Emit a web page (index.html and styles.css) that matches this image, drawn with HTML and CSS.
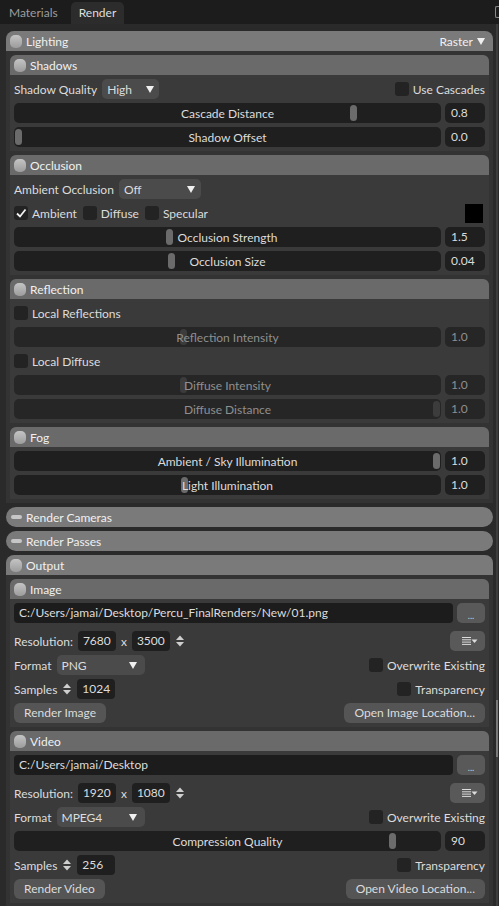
FILE: index.html
```html
<!DOCTYPE html>
<html lang="en">
  <head>
    <meta charset="UTF-8" />
    <meta name="viewport" content="width=device-width, initial-scale=1.0" />
    <title>Render Settings</title>
    <link rel="stylesheet" href="styles.css">
  </head>
  <body>
    <div class="tabs">
      <div class="tab">Materials</div>
      <div class="tab on">Render</div>
      <div class="tab-end"></div>
    </div>

    <div class="view">
      <div class="scroll">

        <!-- Lighting -->
        <section class="panel">
          <header class="head"><span class="ico"></span>Lighting<span class="mode">Raster <i class="tri"></i></span></header>
          <div class="panel-body">

            <section class="sub">
              <header class="head"><span class="ico"></span>Shadows</header>
              <div class="sub-body">
                <div class="row gap5">
                  <span>Shadow Quality</span>
                  <div class="drop w-quality">High <i class="tri"></i></div>
                  <label class="opt right"><span class="check"></span>Use Cascades</label>
                </div>
                <div class="row">
                  <div class="slider"><span class="knob" style="left:336px"></span><span class="label">Cascade Distance</span></div>
                  <div class="num">0.8</div>
                </div>
                <div class="row">
                  <div class="slider"><span class="knob" style="left:1px"></span><span class="label">Shadow Offset</span></div>
                  <div class="num">0.0</div>
                </div>
              </div>
            </section>

            <section class="sub">
              <header class="head"><span class="ico"></span>Occlusion</header>
              <div class="sub-body">
                <div class="row gap5">
                  <span>Ambient Occlusion</span>
                  <div class="drop w-ao">Off <i class="tri"></i></div>
                </div>
                <div class="row gap6">
                  <label class="opt"><span class="check">
                    <svg width="14" height="14" viewBox="0 0 14 14"><polyline points="3,7.5 6,10.5 11.5,3.5" fill="none" stroke="#f2f2f2" stroke-width="1.8"/></svg>
                  </span>Ambient</label>
                  <label class="opt"><span class="check"></span>Diffuse</label>
                  <label class="opt"><span class="check"></span>Specular</label>
                  <span class="swatch"></span>
                </div>
                <div class="row">
                  <div class="slider"><span class="knob" style="left:152px"></span><span class="label">Occlusion Strength</span></div>
                  <div class="num">1.5</div>
                </div>
                <div class="row">
                  <div class="slider"><span class="knob" style="left:154px"></span><span class="label">Occlusion Size</span></div>
                  <div class="num">0.04</div>
                </div>
              </div>
            </section>

            <section class="sub">
              <header class="head"><span class="ico"></span>Reflection</header>
              <div class="sub-body">
                <div class="row">
                  <label class="opt"><span class="check"></span>Local Reflections</label>
                </div>
                <div class="row off">
                  <div class="slider"><span class="knob" style="left:166px"></span><span class="label">Reflection Intensity</span></div>
                  <div class="num">1.0</div>
                </div>
                <div class="row">
                  <label class="opt"><span class="check"></span>Local Diffuse</label>
                </div>
                <div class="row off">
                  <div class="slider"><span class="knob" style="left:166px"></span><span class="label">Diffuse Intensity</span></div>
                  <div class="num">1.0</div>
                </div>
                <div class="row off">
                  <div class="slider"><span class="knob" style="left:419px"></span><span class="label">Diffuse Distance</span></div>
                  <div class="num">1.0</div>
                </div>
              </div>
            </section>

            <section class="sub">
              <header class="head"><span class="ico"></span>Fog</header>
              <div class="sub-body">
                <div class="row">
                  <div class="slider"><span class="knob" style="left:419px"></span><span class="label">Ambient / Sky Illumination</span></div>
                  <div class="num">1.0</div>
                </div>
                <div class="row">
                  <div class="slider"><span class="knob" style="left:167px"></span><span class="label">Light Illumination</span></div>
                  <div class="num">1.0</div>
                </div>
              </div>
            </section>

          </div>
        </section>

        <section class="panel closed">
          <header class="head"><span class="ico"></span>Render Cameras</header>
        </section>
        <section class="panel closed">
          <header class="head"><span class="ico"></span>Render Passes</header>
        </section>

        <!-- Output -->
        <section class="panel">
          <header class="head"><span class="ico"></span>Output</header>
          <div class="panel-body">

            <section class="sub">
              <header class="head"><span class="ico"></span>Image</header>
              <div class="sub-body">
                <div class="row path-row">
                  <div class="path">C:/Users/jamai/Desktop/Percu_FinalRenders/New/01.png</div>
                  <div class="dots">...</div>
                </div>
                <div class="row gap5">
                  <span>Resolution:</span>
                  <div class="field">7680</div>
                  <span>x</span>
                  <div class="field">3500</div>
                  <svg class="spin" width="10" height="16" viewBox="0 0 10 16"><polygon points="1,7 5,2.5 9,7" fill="#cfcfcf"/><polygon points="1,9 5,13.5 9,9" fill="#cfcfcf"/></svg>
                  <div class="menu">
                    <svg width="16" height="10" viewBox="0 0 16 10"><path d="M0 1.5h9M0 3.8h9M0 6.1h9M0 8.4h9" stroke="#dcdcdc" stroke-width="1"/><polygon points="9.5,3.5 15.5,3.5 12.5,7" fill="#dcdcdc"/></svg>
                  </div>
                </div>
                <div class="row gap5">
                  <span>Format</span>
                  <div class="drop w-format">PNG <i class="tri"></i></div>
                  <label class="opt right"><span class="check"></span>Overwrite Existing</label>
                </div>
                <div class="row gap5">
                  <span>Samples</span>
                  <svg class="spin" width="10" height="16" viewBox="0 0 10 16"><polygon points="1,7 5,2.5 9,7" fill="#cfcfcf"/><polygon points="1,9 5,13.5 9,9" fill="#cfcfcf"/></svg>
                  <div class="field">1024</div>
                  <label class="opt right"><span class="check"></span>Transparency</label>
                </div>
                <div class="row">
                  <div class="btn">Render Image</div>
                  <div class="btn right">Open Image Location...</div>
                </div>
              </div>
            </section>

            <section class="sub">
              <header class="head"><span class="ico"></span>Video</header>
              <div class="sub-body">
                <div class="row path-row">
                  <div class="path">C:/Users/jamai/Desktop</div>
                  <div class="dots">...</div>
                </div>
                <div class="row gap5">
                  <span>Resolution:</span>
                  <div class="field">1920</div>
                  <span>x</span>
                  <div class="field">1080</div>
                  <svg class="spin" width="10" height="16" viewBox="0 0 10 16"><polygon points="1,7 5,2.5 9,7" fill="#cfcfcf"/><polygon points="1,9 5,13.5 9,9" fill="#cfcfcf"/></svg>
                  <div class="menu">
                    <svg width="16" height="10" viewBox="0 0 16 10"><path d="M0 1.5h9M0 3.8h9M0 6.1h9M0 8.4h9" stroke="#dcdcdc" stroke-width="1"/><polygon points="9.5,3.5 15.5,3.5 12.5,7" fill="#dcdcdc"/></svg>
                  </div>
                </div>
                <div class="row gap5">
                  <span>Format</span>
                  <div class="drop w-format">MPEG4 <i class="tri"></i></div>
                  <label class="opt right"><span class="check"></span>Overwrite Existing</label>
                </div>
                <div class="row">
                  <div class="slider"><span class="knob" style="left:375px"></span><span class="label">Compression Quality</span></div>
                  <div class="num">90</div>
                </div>
                <div class="row gap5">
                  <span>Samples</span>
                  <svg class="spin" width="10" height="16" viewBox="0 0 10 16"><polygon points="1,7 5,2.5 9,7" fill="#cfcfcf"/><polygon points="1,9 5,13.5 9,9" fill="#cfcfcf"/></svg>
                  <div class="field">256</div>
                  <label class="opt right"><span class="check"></span>Transparency</label>
                </div>
                <div class="row">
                  <div class="btn">Render Video</div>
                  <div class="btn right">Open Video Location...</div>
                </div>
              </div>
            </section>

          </div>
        </section>

      </div>
      <div class="scrollbar"><div class="thumb"></div></div>
    </div>
  </body>
</html>
```

FILE: styles.css
```css
* {
  box-sizing: border-box;
}
body {
  margin: 0;
  width: 499px;
  height: 906px;
  overflow: hidden;
  background-color: #2a2a2a;
  color: #dcdcdc;
  font-family: "Lato", "Noto Sans", sans-serif;
  font-size: 12px;
}

/* tab strip */
.tabs {
  height: 24px;
  display: flex;
  align-items: flex-end;
  gap: 5px;
  padding-left: 1px;
  background-color: #1c1c1c;
}
.tab {
  height: 22px;
  line-height: 22px;
  padding: 0 8px;
  color: #9c9c9c;
  border-radius: 5px 5px 0 0;
}
.tab.on {
  background-color: #2c2c2c;
  color: #dedede;
}
.tab-end {
  margin-left: auto;
  align-self: center;
  width: 4px;
  height: 12px;
  border: 1px solid #8a8a8a;
  border-right: 0;
  border-radius: 2px 0 0 2px;
}

/* scroll area */
.view {
  display: flex;
  height: 882px;
}
.scroll {
  flex: 1;
  display: flex;
  flex-direction: column;
  gap: 4px;
  padding: 7px 1px 0 6px;
}
.scrollbar {
  width: 5px;
  padding: 0 1px 0 2px;
}
.scrollbar .thumb {
  width: 2px;
  height: 100%;
  background: linear-gradient(#3d3d3d 676px, #7a7a7a 676px, #7a7a7a 733px, #3d3d3d 733px);
}

/* panels */
.panel {
  background-color: #333;
  border-radius: 8px 8px 0 0;
}
.panel-body {
  display: flex;
  flex-direction: column;
  gap: 4px;
  padding: 4px;
}
.head {
  height: 20px;
  display: flex;
  align-items: center;
  padding: 0 8px 0 4px;
  background-color: #7a7a7a;
  color: #f0f0f0;
  border-radius: 8px 8px 0 0;
}
.head .ico {
  width: 12px;
  height: 13px;
  margin-right: 4px;
  border-radius: 5px;
  background: linear-gradient(#c4c4c4, #9c9c9c);
}
.head .mode {
  margin-left: auto;
  display: flex;
  align-items: center;
  gap: 4px;
}
.panel.closed .head {
  border-radius: 10px;
  padding-left: 5px;
}
.panel.closed .ico {
  width: 11px;
  height: 4px;
  margin-right: 4px;
  border-radius: 2px;
  background: #c6c6c6;
}
.panel.closed {
  background-color: transparent;
}

.sub {
  background-color: #3a3a3a;
  border-radius: 6px 6px 0 0;
}
.sub .head {
  background-color: #6a6a6a;
  border-radius: 6px 6px 0 0;
}
.sub-body {
  display: flex;
  flex-direction: column;
  gap: 4px;
  padding: 4px;
}

/* rows and controls */
.row {
  height: 20px;
  display: flex;
  align-items: center;
  gap: 4px;
  white-space: nowrap;
}
.row.gap5 {
  gap: 5px;
}
.row.gap6 {
  gap: 6px;
}
.right {
  margin-left: auto;
}
.tri {
  display: inline-block;
  width: 0;
  height: 0;
  border-left: 4.5px solid transparent;
  border-right: 4.5px solid transparent;
  border-top: 7px solid #f0f0f0;
}
.drop {
  height: 20px;
  display: flex;
  align-items: center;
  justify-content: space-between;
  padding: 0 5px;
  background-color: #4b4b4b;
  border-radius: 5px;
}
.w-quality {
  width: 57px;
}
.w-ao {
  width: 82px;
  padding-right: 6px;
}
.w-format {
  width: 88px;
  padding-right: 8px;
}
.opt {
  display: flex;
  align-items: center;
  gap: 4px;
}
.check {
  width: 14px;
  height: 14px;
  border-radius: 3px;
  background-color: #232323;
}
.check svg {
  display: block;
}
.swatch {
  margin: 0 2px 0 auto;
  width: 18px;
  height: 19px;
  background-color: #000;
}

.slider {
  flex: 1;
  height: 20px;
  position: relative;
  display: flex;
  align-items: center;
  justify-content: center;
  background-color: #1f1f1f;
  border-radius: 5px;
}
.slider .knob {
  position: absolute;
  top: 2px;
  width: 7px;
  height: 16px;
  border-radius: 4px;
  background-color: #6b6b6b;
}
.slider .label {
  position: relative;
}
.num {
  width: 40px;
  height: 20px;
  line-height: 20px;
  padding-left: 6px;
  background-color: #1f1f1f;
  border-radius: 5px;
}
.row.off .slider,
.row.off .num {
  background-color: #262626;
  color: #8f8f8f;
}
.row.off .knob {
  background-color: #3c3c3c;
}

.path-row {
  margin-bottom: 4px;
}
.path {
  flex: 1;
  height: 20px;
  line-height: 20px;
  padding-left: 5px;
  background-color: #1c1c1c;
  border-radius: 4px;
}
.dots {
  width: 28px;
  height: 20px;
  display: flex;
  align-items: flex-end;
  justify-content: center;
  padding-bottom: 3px;
  font-size: 9px;
  line-height: 9px;
  color: #cfcfcf;
  background-color: #595959;
  border-radius: 5px;
}
.field {
  width: 38px;
  height: 20px;
  line-height: 20px;
  padding-left: 5px;
  background-color: #1f1f1f;
  border-radius: 4px;
}
.spin {
  display: block;
}
.menu {
  margin-left: auto;
  width: 35px;
  height: 20px;
  display: flex;
  align-items: center;
  justify-content: flex-end;
  padding-right: 7px;
  background-color: #595959;
  border-radius: 5px;
}
.menu svg {
  display: block;
}
.btn {
  height: 20px;
  line-height: 20px;
  padding: 0 10px;
  background-color: #555;
  border-radius: 6px;
}
```
